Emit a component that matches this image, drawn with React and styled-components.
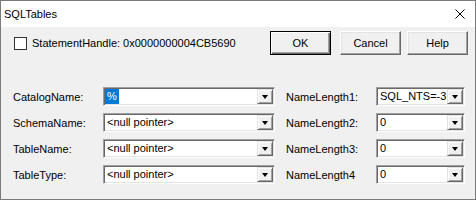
import React from "react";
import styled, { createGlobalStyle } from "styled-components";

const Global = createGlobalStyle`
  html, body { margin: 0; padding: 0; background: #f0f0f0; }
  body { font-family: "Liberation Sans", Arial, sans-serif; }
`;

const Window = styled.div`
  width: 476px;
  height: 200px;
  box-sizing: border-box;
  border: 1px solid #7a7a7a;
  background: #f0f0f0;
  display: flex;
  flex-direction: column;
  overflow: hidden;
`;

const TitleBar = styled.div`
  height: 26px;
  background: #ffffff;
  display: flex;
  align-items: center;
  justify-content: space-between;
  padding: 0 10px 0 3px;
  font-family: "Liberation Sans", Arial, sans-serif;
  font-size: 11px;
  color: #000;
`;

const Body = styled.div`
  flex: 1;
  padding: 4px 7px 0 12px;
  font-size: 11px;
  color: #000;
`;

const TopRow = styled.div`
  display: flex;
  align-items: center;
  height: 24px;
`;

const CheckLabel = styled.label`
  display: flex;
  align-items: center;
  gap: 5px;
  flex: 1;
  font-size: 11px;
`;

const Box = styled.span`
  width: 11px;
  height: 11px;
  margin-left: 1px;
  border: 1px solid #333;
  background: #fff;
  display: inline-block;
`;

const Buttons = styled.div`
  display: flex;
  gap: 6px;
`;

const Button = styled.button`
  width: 61px;
  height: 24px;
  box-sizing: border-box;
  margin: 0 ${(p) => (p.$default ? "3px" : "0")} 0 0;
  padding: 0;
  font-family: "Liberation Sans", Arial, sans-serif;
  font-size: 11px;
  color: #000;
  background: #f0f0f0;
  border: 1px solid;
  border-color: ${(p) => (p.$default ? "#000" : "#fff #696969 #696969 #fff")};
  box-shadow: ${(p) =>
    p.$default
      ? "inset 1px 1px 0 #fff, inset -1px -1px 0 #696969, inset -2px -2px 0 #a0a0a0"
      : "inset -1px -1px 0 #a0a0a0, inset 1px 1px 0 #e3e3e3"};
`;

const Form = styled.div`
  margin-top: 32px;
  display: grid;
  grid-template-columns: 90px 172px 101px 89px;
  grid-auto-rows: 19px;
  row-gap: 7px;
  align-items: center;
`;

const Label = styled.div`
  font-size: 11px;
  padding-left: ${(p) => (p.$second ? "11px" : "0")};
  white-space: nowrap;
`;

const ComboBox = styled.div`
  height: 19px;
  box-sizing: border-box;
  border: 1px solid;
  border-color: #a0a0a0 #ffffff #ffffff #a0a0a0;
  box-shadow: inset 1px 1px 0 #696969, inset -1px -1px 0 #e3e3e3;
  background: #fff;
  display: flex;
  padding: 1px;
`;

const ComboText = styled.div`
  flex: 1;
  display: flex;
  align-items: center;
  padding-left: ${(p) => (p.$selected ? "0" : "2px")};
  font-size: 11px;
  line-height: 15px;
  white-space: nowrap;
  overflow: hidden;
`;

const Selected = styled.span`
  background: #0078d7;
  color: #fff;
  padding: 0 2px;
  height: 15px;
  line-height: 15px;
`;

const Drop = styled.div`
  width: 16px;
  height: 15px;
  box-sizing: border-box;
  background: #f0f0f0;
  border: 1px solid;
  border-color: #e3e3e3 #696969 #696969 #e3e3e3;
  box-shadow: inset 1px 1px 0 #fff, inset -1px -1px 0 #a0a0a0;
  display: flex;
  align-items: center;
  justify-content: center;
  &::after {
    content: "";
    width: 0;
    height: 0;
    margin-top: 1px;
    border-left: 3.5px solid transparent;
    border-right: 3.5px solid transparent;
    border-top: 4px solid #000;
  }
`;

function Combo({ value, selected }) {
  return (
    <ComboBox>
      <ComboText $selected={selected}>
        {selected ? <Selected>{value}</Selected> : value}
      </ComboText>
      <Drop />
    </ComboBox>
  );
}

const rows = [
  ["CatalogName:", "%", true, "NameLength1:", "SQL_NTS=-3"],
  ["SchemaName:", "<null pointer>", false, "NameLength2:", "0"],
  ["TableName:", "<null pointer>", false, "NameLength3:", "0"],
  ["TableType:", "<null pointer>", false, "NameLength4", "0"],
];

export default function App() {
  return (
    <>
      <Global />
      <Window>
        <TitleBar>
          <span>SQLTables</span>
          <svg width="10" height="10" viewBox="0 0 10 10">
            <path d="M0.5 0.5 L9.5 9.5 M9.5 0.5 L0.5 9.5" stroke="#000" strokeWidth="1" />
          </svg>
        </TitleBar>
        <Body>
          <TopRow>
            <CheckLabel>
              <Box />
              StatementHandle: 0x0000000004CB5690
            </CheckLabel>
            <Buttons>
              <Button $default>OK</Button>
              <Button>Cancel</Button>
              <Button>Help</Button>
            </Buttons>
          </TopRow>
          <Form>
            {rows.map(([l1, v1, sel, l2, v2]) => (
              <React.Fragment key={l1}>
                <Label>{l1}</Label>
                <Combo value={v1} selected={sel} />
                <Label $second>{l2}</Label>
                <Combo value={v2} />
              </React.Fragment>
            ))}
          </Form>
        </Body>
      </Window>
    </>
  );
}
